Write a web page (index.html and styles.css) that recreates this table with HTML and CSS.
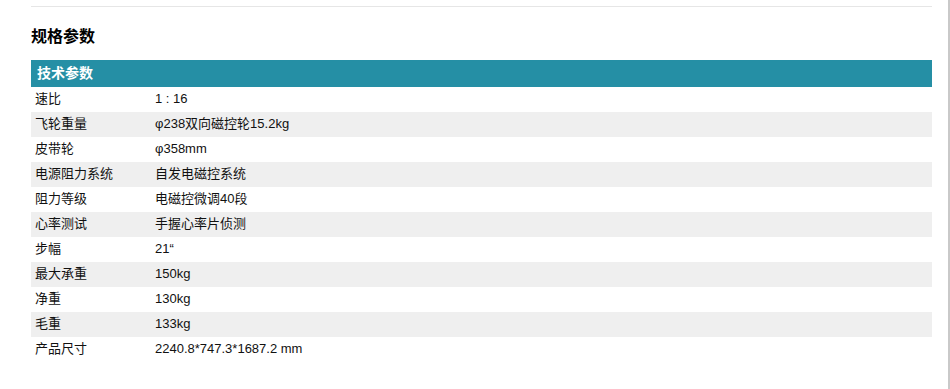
FILE: index.html
```html
<!DOCTYPE html>
<html lang="zh-CN">
<head>
<meta charset="utf-8">
<title>规格参数</title>
<link rel="stylesheet" href="styles.css">
</head>
<body>
<div class="page">
  <div class="content">
    <div class="rule"></div>
    <h2 class="title">规格参数</h2>
    <table class="spec">
      <thead>
        <tr><th colspan="2">技术参数</th></tr>
      </thead>
      <tbody>
        <tr><td class="k">速比</td><td>1 : 16</td></tr>
        <tr><td class="k">飞轮重量</td><td>φ238双向磁控轮15.2kg</td></tr>
        <tr><td class="k">皮带轮</td><td>φ358mm</td></tr>
        <tr><td class="k">电源阻力系统</td><td>自发电磁控系统</td></tr>
        <tr><td class="k">阻力等级</td><td>电磁控微调40段</td></tr>
        <tr><td class="k">心率测试</td><td>手握心率片侦测</td></tr>
        <tr><td class="k">步幅</td><td>21“</td></tr>
        <tr><td class="k">最大承重</td><td>150kg</td></tr>
        <tr><td class="k">净重</td><td>130kg</td></tr>
        <tr><td class="k">毛重</td><td>133kg</td></tr>
        <tr><td class="k">产品尺寸</td><td>2240.8*747.3*1687.2 mm</td></tr>
      </tbody>
    </table>
  </div>
</div>
</body>
</html>
```
FILE: styles.css
```css
html, body {
  margin: 0;
  padding: 0;
  background: #fff;
}
body {
  font-family: "Liberation Sans", Arial, "Noto Sans CJK SC", sans-serif;
  color: #111;
}
.page {
  width: 948px;
  height: 389px;
  border-right: 2px solid #c9c9c9;
  overflow: hidden;
}
.content {
  margin-left: 31px;
  width: 901px;
  padding-top: 6px;
}
.rule {
  border-top: 1px solid #e6e6e6;
}
.title {
  margin: 20px 0 13px;
  font-size: 16px;
  line-height: 20px;
  font-weight: bold;
  color: #000;
}
.spec {
  width: 100%;
  border-collapse: collapse;
  border-spacing: 0;
}
.spec th {
  background: #258fa5;
  color: #fff;
  text-align: left;
  font-size: 14px;
  font-weight: bold;
  height: 27px;
  line-height: 27px;
  padding: 0 6px;
}
.spec td {
  font-size: 13px;
  line-height: 23px;
  height: 23px;
  padding: 0 4px 2px;
  vertical-align: top;
}
.spec td.k {
  width: 112px;
}
.spec tbody tr:nth-child(even) td {
  background: #efefef;
}
```
